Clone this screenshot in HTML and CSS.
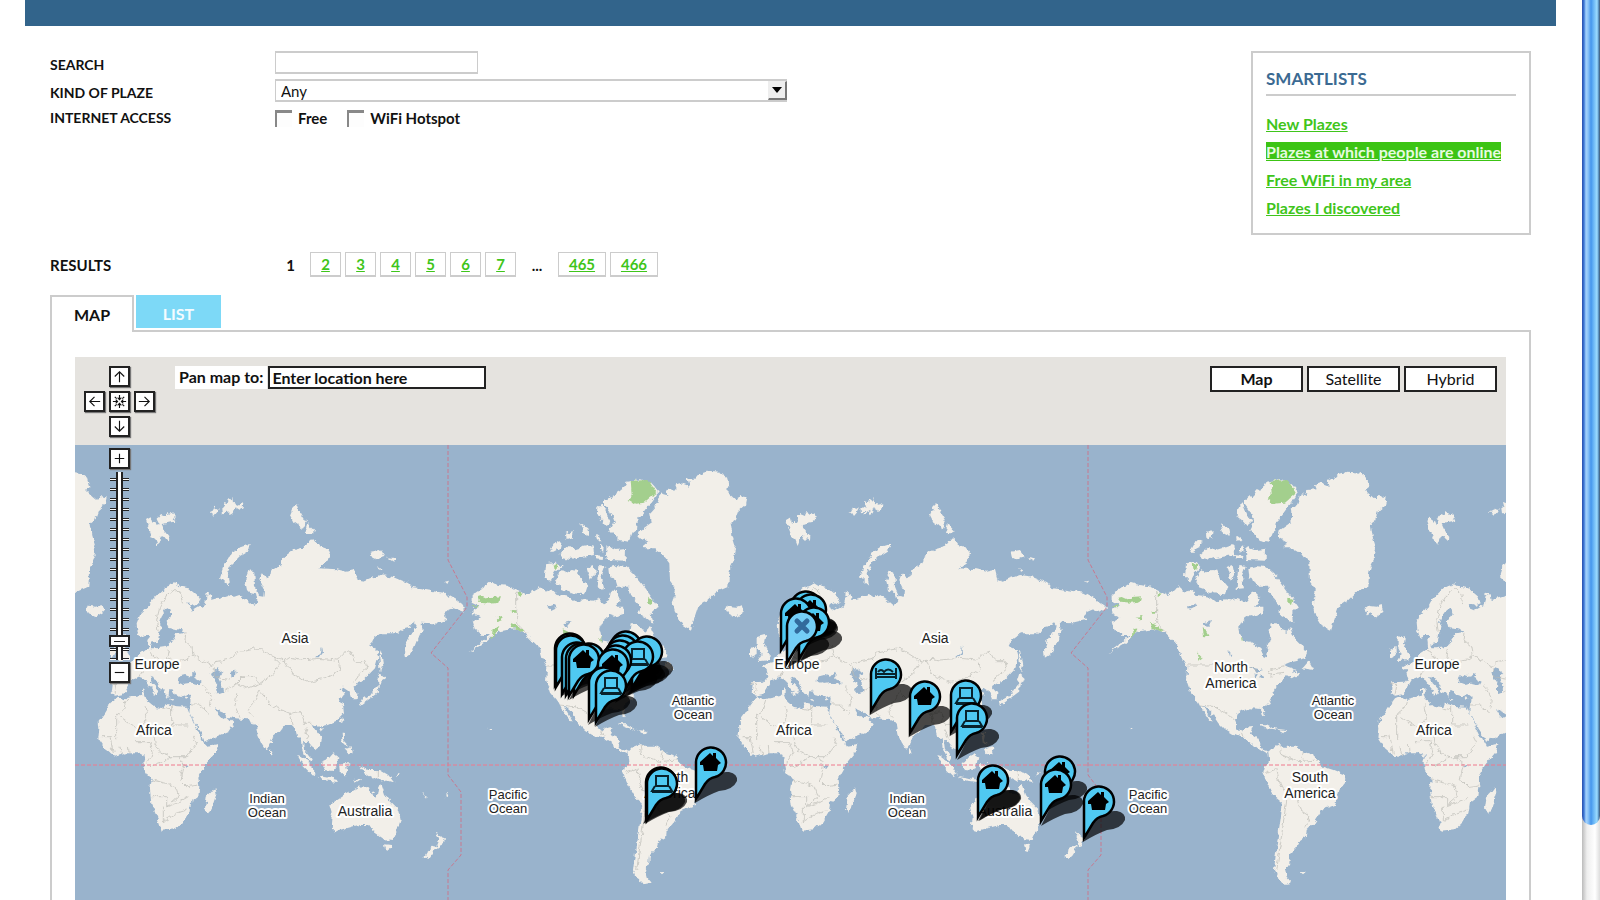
FILE: index.html
```html
<!DOCTYPE html>
<html lang="en">
<head>
<meta charset="utf-8">
<title>Plazes</title>
<link rel="stylesheet" href="styles.css">
</head>
<body>
<div class="window">
  <main class="page">
    <div class="banner"></div>
    <div class="content">
      <div class="top">
        <form class="filters">
          <label class="caption" for="search">SEARCH</label>
          <input class="field search" id="search" type="text">
          <label class="caption" for="kind">KIND OF PLAZE</label>
          <div class="select-wrap">
            <select class="field kind" id="kind"><option>Any</option></select>
            <span class="select-arrow"></span>
          </div>
          <span class="caption access">INTERNET ACCESS</span>
          <div class="checks">
            <label class="check"><input type="checkbox">Free</label>
            <label class="check"><input type="checkbox">WiFi Hotspot</label>
          </div>
        </form>
        <aside class="smartlists">
          <h2>SMARTLISTS</h2>
          <ul>
            <li><a href="#">New Plazes</a></li>
            <li><a class="current" href="#">Plazes at which people are online</a></li>
            <li><a href="#">Free WiFi in my area</a></li>
            <li><a href="#">Plazes I discovered</a></li>
          </ul>
        </aside>
      </div>
      <div class="results">
        <span class="results-title">RESULTS</span>
        <nav class="pages">
          <span class="here">1</span>
          <a href="#">2</a><a href="#">3</a><a href="#">4</a><a href="#">5</a><a href="#">6</a><a href="#">7</a>
          <span class="dots">...</span>
          <a class="wide" href="#">465</a><a class="wide" href="#">466</a>
        </nav>
      </div>
      <div class="tabs">
        <button class="tab active" type="button">MAP</button>
        <button class="tab" type="button">LIST</button>
      </div>
      <section class="panel">
        <div class="map">
          <svg class="world" width="100%" height="600" role="img" aria-label="World map">
            <defs>
              <filter id="coast" x="-5%" y="-5%" width="110%" height="110%">
                <feTurbulence type="fractalNoise" baseFrequency="0.16" numOctaves="3" seed="4" result="n"/>
                <feDisplacementMap in="SourceGraphic" in2="n" scale="6" xChannelSelector="R" yChannelSelector="G"/>
              </filter>
              <g id="east" transform="translate(625 -17) scale(.33333)">
                <g class="land">
                  <path d="M230 850L240 825 262 805 272 785 290 765 310 745 345 730 362 740 385 745 415 770 422 790 405 797 385 790 395 812 420 797 432 800 440 770 452 762 455 780 475 775 505 765 520 770 535 765 560 780 580 798 592 780 588 760 565 755 558 720 570 688 583 695 585 740 597 768 610 770 612 750 598 720 605 700 620 712 635 705 637 690 665 672 668 655 700 630 735 620 750 600 765 598 778 618 800 625 810 640 800 665 775 685 830 688 860 695 885 690 893 720 905 725 930 715 960 705 1000 710 1045 730 1058 745 1100 750 1150 758 1190 780 1218 800 1210 815 1180 805 1155 815 1160 840 1120 850 1082 848 1085 870 1075 895 1065 920 1050 945 1035 955 1032 930 1040 905 1060 880 1070 860 1060 847 1050 860 1030 865 1010 880 960 880 940 895 928 920 950 930 955 950 945 985 920 1010 905 1025 892 1030 874 1040 892 1060 890 1078 876 1078 868 1055 850 1043 838 1052 832 1050 856 1060 848 1070 836 1075 850 1100 852 1120 835 1140 800 1155 775 1160 755 1155 770 1175 785 1195 783 1215 768 1228 755 1218 745 1205 732 1207 735 1230 755 1255 750 1265 735 1245 728 1225 725 1195 712 1190 705 1165 695 1155 675 1155 660 1175 635 1195 630 1215 618 1230 605 1210 592 1180 588 1155 580 1145 565 1138 525 1135 500 1130 490 1115 465 1105 475 1122 490 1137 502 1130 521 1150 505 1175 470 1190 435 1205 425 1180 405 1150 388 1118 390 1095 392 1070 385 1065 365 1072 345 1065 338 1052 328 1050 325 1072 315 1060 302 1045 290 1020 270 1010 278 1030 300 1052 290 1065 270 1040 252 1015 240 1010 215 1020 200 1045 190 1062 165 1067 155 1060 158 1035 153 1027 195 1025 205 1010 200 990 185 980 205 970 225 965 235 945 250 935 265 925 262 900 270 890 277 905 272 925 290 925 320 920 335 905 345 890 350 880 375 875 355 868 325 865 320 845 335 820 330 805 318 810 305 830 297 850 308 860 295 880 290 905 277 908 268 885 255 885 240 892 232 870Z"/>
                  <path d="M175 1070L195 1078 255 1065 262 1085 280 1100 310 1105 315 1090 345 1098 380 1100 390 1125 410 1165 425 1195 438 1217 475 1212 468 1235 435 1275 415 1310 418 1340 415 1370 390 1390 385 1420 370 1445 345 1468 305 1472 295 1440 275 1395 270 1350 275 1320 255 1290 250 1265 255 1250 235 1240 200 1240 165 1250 135 1225 115 1195 118 1165 116 1145 135 1120 150 1095 165 1075Z"/>
                  <path d="M465 1342L470 1360 455 1405 443 1418 435 1405 440 1370 455 1355ZM808 1395L820 1385 850 1365 875 1352 895 1340 925 1338 930 1355 950 1370 955 1340 965 1335 975 1365 990 1385 1015 1410 1022 1440 1010 1475 998 1500 970 1497 950 1480 935 1470 925 1455 895 1455 860 1465 825 1475 815 1465 818 1430ZM975 1513L993 1515 986 1533 978 1530ZM1125 1472L1140 1490 1155 1495 1145 1515 1130 1520 1138 1500ZM1125 1515L1130 1522 1108 1557 1090 1552 1100 1535ZM900 1278L925 1290 960 1290 985 1305 1003 1328 975 1320 950 1322 920 1305ZM783 1270L800 1262 820 1240 835 1250 830 1275 820 1293 795 1290ZM712 1245L722 1248 745 1265 770 1303 760 1308 730 1278ZM770 1308L800 1312 835 1320 832 1326 790 1320ZM840 1270L872 1270 855 1280 860 1302 843 1303ZM845 1178L856 1178 852 1200 868 1217 848 1208ZM855 1227L875 1222 878 1240 862 1243ZM880 1320L905 1318 885 1330ZM1010 1300L1020 1300 1005 1312ZM1085 1355L1100 1370 1096 1372ZM1160 1362L1165 1368 1150 1375Z"/>
                  <path d="M958 1000L978 1018 958 1030 952 1020ZM960 1030L957 1055 935 1072 900 1098 896 1085 933 1065 948 1040ZM962 930L970 975 962 997 958 950ZM848 1135L854 1138 848 1152 843 1148ZM630 1225L638 1240 630 1246ZM780 1165L792 1162 786 1175ZM258 540L272 532 277 548 285 542 290 555 297 548 290 535 300 522 315 528 318 516 330 524 344 520 347 532 340 545 318 550 305 552 312 568 328 588 327 602 318 598 308 585 303 592 293 618 286 600 276 592 270 575ZM445 518L458 512 463 503 470 508 480 502 474 514 462 528 456 518ZM484 505L495 498 492 486 503 490 508 474 516 482 520 470 522 488 532 494 550 490 548 505 536 512 524 505 518 520 508 526 508 512 498 518 486 520ZM572 612L568 628 540 645 515 670 500 700 508 737 480 712 490 680 515 640 545 620ZM710 490L722 520 738 545 728 565 700 545 690 525 700 500ZM745 550L765 572 755 583 735 582ZM932 635L960 630 974 652 950 658 935 650ZM980 650L1005 655 1000 662ZM955 680L968 690 960 692ZM1155 725L1167 722 1162 732ZM75 805L85 797 110 800 125 795 131 815 105 832 85 822ZM437 755l10 2 -2 12 -9-4ZM246 1048l8-3 0 22-8 0ZM275 1055l15 5-8 8ZM325 1076l15 2-4 4ZM372 1072l14 3-8 4Z"/>
                </g>
                <g class="sea">
                  <path d="M355 1010L375 1005 390 1010 405 995 411 1005 402 1013 425 1025 420 1034 395 1028 370 1032 353 1025ZM452 1000L470 985 490 998 478 1015 485 1030 490 1057 475 1062 465 1050 472 1035 460 1018ZM512 995L527 992 525 1008 515 1013ZM370 1276L386 1277 378 1288ZM765 952L783 937 786 918 789 935 776 952Z"/>
                </g>
                <path class="border" d="M295 880L290 840 300 800 320 765 345 745 362 760 368 790M375 875L372 900 395 920 400 945 380 960 350 965 320 955 325 930M400 945L455 980 470 965 520 955 530 940 570 930 600 925 640 950 675 965 690 955 720 960 780 955 830 960 850 940 870 935 885 965 915 965 920 985 895 1005 880 1025M675 965L700 1005 750 1027 800 1015 840 990 835 965M640 950L660 970 640 1000 600 1030 560 1045 530 1030 490 1055M530 1030L550 1010 580 1010 600 1030M460 985L460 1010 510 1020M445 1050L430 1035M440 1050L455 1075 450 1100M530 1060L525 1100 540 1130M600 1050L575 1100 565 1115 580 1130M605 1060L640 1100 690 1120 720 1115 730 1150 755 1150M690 1120L700 1155M735 1165L745 1200M200 1080L190 1110 170 1125 170 1200M255 1095L260 1130 240 1170 180 1130M335 1098L335 1155 385 1155M310 1105L335 1110M280 1180L285 1210 300 1240 330 1250 380 1250 410 1210 400 1190M225 1205L270 1205 280 1240 260 1270M125 1190L150 1190 160 1240M180 1220L185 1245M205 1215L207 1240M330 1250L300 1270 270 1280M355 1250L370 1275 360 1320 380 1340 415 1335M275 1320L320 1330 345 1340 355 1370 320 1400 320 1370 275 1370M320 1400L350 1390 385 1370M310 1400L310 1445 350 1420 380 1410M390 1095L420 1095 450 1120M955 1290V1322M235 965L250 990 240 1010M265 930L280 950 300 960 290 980M150 1030L170 1035 165 1062"/>
              </g>
              <g id="west" transform="translate(385 83) scale(.33333)">
                <g class="land">
                  <path d="M35 465L65 445 90 428 115 435 145 438 175 452 200 465 240 442 255 455 275 450 290 465 330 470 350 487 375 478 400 482 420 475 430 490 447 480 452 455 470 455 482 480 465 500 490 500 490 522 465 530 450 525 430 540 418 565 425 600 450 605 480 620 490 650 500 655 505 628 500 615 515 600 508 580 512 550 530 550 545 570 560 575 570 560 580 590 600 610 622 640 615 655 580 662 550 675 560 680 590 690 602 700 575 715 560 705 550 725 530 740 520 760 505 790 490 800 495 830 485 825 480 807 450 805 415 815 405 840 410 865 425 872 440 860 458 858 450 885 470 892 475 910 490 930 507 935 500 942 480 930 450 905 425 890 400 885 375 870 355 850 330 812 310 795 338 845 328 840 305 805 295 785 270 755 258 720 262 680 245 655 235 620 215 600 195 580 170 568 140 570 115 575 95 590 75 610 25 640 70 603 90 585 65 585 45 570 38 545 60 532 35 520 40 505 60 497 35 485Z"/>
                  <path d="M505 935L520 920 540 912 550 920 590 920 610 935 640 945 655 965 670 980 700 990 737 1005 735 1025 715 1050 705 1095 665 1110 640 1150 620 1170 618 1190 595 1205 590 1225 570 1245 568 1270 555 1290 560 1310 575 1328 555 1332 530 1315 522 1290 530 1220 540 1150 548 1090 525 1070 505 1035 490 1000 495 980 508 965ZM598 1296L614 1296 606 1303Z"/>
                  <path d="M540 270L575 245 570 215 592 190 602 160 622 165 618 150 650 148 645 135 662 130 690 140 682 115 700 120 715 103 740 95 780 98 800 112 808 140 795 150 805 160 830 182 838 168 860 172 855 195 835 212 825 240 812 250 818 290 827 320 820 345 825 355 812 380 807 400 805 440 770 455 745 480 715 500 705 530 692 572 665 555 650 530 638 490 648 450 630 425 628 370 605 340 580 325 550 325 562 305 535 290Z"/>
                  <path d="M435 180L450 168 458 175 470 150 482 155 500 125 540 118 575 130 597 155 575 185 550 220 530 245 528 270 515 280 505 305 480 300 450 270 462 245 450 215 435 195ZM412 205L428 190 440 220 455 245 440 258 425 240 410 228ZM440 318L470 330 498 326 497 362 440 360 438 340ZM270 335L290 300 305 305 300 325 280 335ZM318 280L338 270 335 295 320 300ZM360 250L385 265 390 290 370 280ZM298 345L330 318 345 328 370 320 400 315 402 345 370 350 330 357 308 352ZM408 285L428 300 410 302ZM420 315L432 318 430 335 420 330ZM405 345L430 348 428 360 408 358ZM258 370L285 365 305 380 285 400 270 425 255 410ZM285 420L305 390 320 398 335 390 352 392 360 415 382 440 375 463 340 460 300 445ZM380 382L400 375 405 400 392 422ZM415 375L437 378 425 410 432 445 410 447ZM445 385L470 378 500 382 520 400 545 430 570 465 595 500 575 520 580 550 560 535 535 520 542 500 515 470 505 440 470 440 462 415 448 412ZM608 685L627 662 642 690ZM473 852L500 853 532 870 505 865ZM532 870L560 873 550 880ZM870 630L890 618 890 645 870 655ZM893 590L915 585 912 612 930 642 925 660 893 664 905 645 893 620ZM85 863l10 5-4 3Z"/>
                </g>
                <g class="sea"><path d="M310 550L335 543 318 562ZM262 500L285 492 290 500 270 510ZM388 630L400 645 395 652ZM445 675L465 685 490 690 468 695ZM460 700L475 708 468 718ZM482 705L495 712 482 718ZM600 690L578 700 585 692ZM590 180l-8 0-44 75 4 2Z"/></g>
                <g class="park"><path d="M512 122L565 120 590 158 555 188 525 191 503 178 515 165ZM278 370L293 372 288 390 280 386ZM55 470L65 468 80 475 123 472 118 485 90 488 60 485ZM172 455L185 458 178 472ZM110 530L128 528 120 542ZM150 545L190 570 185 575 155 562ZM98 565L115 562 95 598ZM308 568L325 575 328 590 312 588ZM562 473L580 480 575 495 562 488ZM288 637L305 655 300 658ZM155 510l15 1-2 7-12 0ZM35 500l20-5-2 7ZM420 590l8 10-6 2Z"/></g>
                <path class="border" d="M170 455V550L200 580M262 675H440L470 690M510 690L550 680M300 795L345 800 380 820 405 845M425 872L432 890M540 915L545 945 600 965 650 960M610 935L605 960M495 1000L530 985 540 1030 550 1050 590 1070 600 1110 630 1130 615 1160M560 1080L550 1150 540 1220 530 1290M505 690L510 705 555 700"/>
              </g>
              <g id="globe"><use href="#west"/><use href="#east"/></g>
              <path id="dateline" d="M1013 88V203L1032 240V250L996 296 1013 311V418L1026 435V498L1013 513V600"/>
              <g id="shade"><path d="M0 0L12-24Q22-32 34-31 43-29 42-22 38-13 24-12 13-8 0 0Z"/></g>
              <g id="pin"><path d="M1-4V-41A15 15 0 1 1 20-26Q14-25 10-19Z"/></g>
              <g id="house"><use href="#pin"/><path class="ink" d="M15-50L18-47V-50H21V-45L26-40 23-38 22-32H9L8-38H5V-41Z"/></g>
              <g id="laptop"><use href="#pin"/><path class="line" d="M10-48H22V-38H10ZM9-38L6-33H26L23-38M6-32H26"/></g>
              <g id="bed"><use href="#pin"/><path class="line" d="M6-47V-36M26-47V-36M6-38H26M6-41H26M8-43Q11-47 14-43 18-48 23-43"/></g>
            </defs>
            <rect class="water" y="88" width="100%" height="512"/>
            <g filter="url(#coast)">
              <use href="#globe" x="-640"/><use href="#globe"/><use href="#globe" x="640"/>
            </g>
            <g class="dash"><use href="#dateline" x="-640"/><use href="#dateline"/></g>
            <path class="equator" d="M0 408H3000"/>
            <g class="place">
              <text x="220" y="286">Asia</text><text x="860" y="286">Asia</text>
              <text x="82" y="312">Europe</text><text x="722" y="312">Europe</text><text x="1362" y="312">Europe</text>
              <text x="79" y="378">Africa</text><text x="719" y="378">Africa</text><text x="1359" y="378">Africa</text>
              <text x="290" y="459">Australia</text><text x="930" y="459">Australia</text>
              <text x="1156" y="315">North</text><text x="1156" y="331">America</text>
              <text x="595" y="425">South</text><text x="595" y="441">America</text>
              <text x="1235" y="425">South</text><text x="1235" y="441">America</text>
            </g>
            <g class="place ocean">
              <text x="192" y="446">Indian</text><text x="192" y="460">Ocean</text>
              <text x="832" y="446">Indian</text><text x="832" y="460">Ocean</text>
              <text x="433" y="442">Pacific</text><text x="433" y="456">Ocean</text>
              <text x="1073" y="442">Pacific</text><text x="1073" y="456">Ocean</text>
              <text x="618" y="348">Atlantic</text><text x="618" y="362">Ocean</text>
              <text x="1258" y="348">Atlantic</text><text x="1258" y="362">Ocean</text>
            </g>
            <g class="shades">
              <use href="#shade" x="487" y="339"/><use href="#shade" x="494" y="343"/><use href="#shade" x="490" y="340"/>
              <use href="#shade" x="544" y="334"/><use href="#shade" x="546" y="338"/><use href="#shade" x="548" y="341"/><use href="#shade" x="556" y="335"/><use href="#shade" x="552" y="339"/><use href="#shade" x="540" y="346"/>
              <use href="#shade" x="513" y="368"/><use href="#shade" x="520" y="370"/>
              <use href="#shade" x="570" y="467"/><use href="#shade" x="568" y="467"/><use href="#shade" x="620" y="446"/>
              <use href="#shade" x="719" y="292"/><use href="#shade" x="720" y="293"/><use href="#shade" x="721" y="295"/><use href="#shade" x="725" y="305"/><use href="#shade" x="712" y="311"/>
              <use href="#shade" x="795" y="358"/><use href="#shade" x="834" y="380"/><use href="#shade" x="875" y="379"/><use href="#shade" x="882" y="403"/>
              <use href="#shade" x="903" y="464"/><use href="#shade" x="904" y="464"/><use href="#shade" x="970" y="455"/><use href="#shade" x="966" y="469"/><use href="#shade" x="1008" y="485"/>
            </g>
            <g class="pins">
              <use href="#pin" x="479" y="332"/><use href="#pin" x="480" y="334"/><use href="#pin" x="486" y="341"/><use href="#pin" x="498" y="342"/><use href="#pin" x="490" y="342"/><use href="#house" x="493" y="343"/>
              <use href="#pin" x="535" y="330"/><use href="#pin" x="532" y="334"/><use href="#pin" x="556" y="335"/><use href="#pin" x="529" y="339"/><use href="#laptop" x="547" y="340"/><use href="#pin" x="525" y="344"/><use href="#house" x="522" y="348"/>
              <use href="#pin" x="513" y="366"/><use href="#laptop" x="520" y="369"/>
              <use href="#house" x="620" y="446"/><use href="#pin" x="570" y="466"/><use href="#laptop" x="571" y="467"/>
              <use href="#pin" x="715" y="290"/><use href="#house" x="720" y="293"/><use href="#house" x="705" y="297"/><use href="#house" x="723" y="306"/>
              <g transform="translate(711 310)"><use class="pale" href="#pin"/><path class="cross" d="M11-46L21-36M21-46L11-36"/></g>
              <use href="#bed" x="795" y="358"/><use href="#laptop" x="875" y="379"/><use href="#house" x="834" y="380"/><use href="#laptop" x="881" y="402"/>
              <use href="#house" x="969" y="455"/><use href="#house" x="902" y="464"/><use href="#house" x="965" y="468"/><use href="#house" x="1008" y="485"/>
            </g>
          </svg>
          <div class="controls">
            <div class="pan">
              <button class="ctl up" type="button" aria-label="Pan up"><svg viewBox="0 0 18 18"><path d="M9 15V4M4 9L9 4 14 9"/></svg></button>
              <button class="ctl left" type="button" aria-label="Pan left"><svg viewBox="0 0 18 18"><path d="M15 9H4M9 4L4 9 9 14"/></svg></button>
              <button class="ctl" type="button" aria-label="Center"><svg viewBox="0 0 18 18"><path d="M9 2V7M7 5L9 7 11 5M9 16V11M7 13L9 11 11 13M2 9H7M5 7L7 9 5 11M16 9H11M13 7L11 9 13 11M4 4L6 6M14 4L12 6M4 14L6 12M14 14L12 12"/></svg></button>
              <button class="ctl" type="button" aria-label="Pan right"><svg viewBox="0 0 18 18"><path d="M3 9H14M9 4L14 9 9 14"/></svg></button>
              <button class="ctl down" type="button" aria-label="Pan down"><svg viewBox="0 0 18 18"><path d="M9 3V14M4 9L9 14 14 9"/></svg></button>
            </div>
            <button class="ctl" type="button" aria-label="Zoom in"><svg viewBox="0 0 18 18"><path d="M4 9H14M9 4V14"/></svg></button>
            <div class="zoom"><input type="range" min="0" max="17" value="1" aria-label="Zoom"></div>
            <button class="ctl" type="button" aria-label="Zoom out"><svg viewBox="0 0 18 18"><path d="M4 9H14"/></svg></button>
          </div>
          <form class="locate">
            <label for="place">Pan map to:</label>
            <input id="place" type="text" value="Enter location here">
          </form>
          <div class="types">
            <button class="on" type="button">Map</button>
            <button type="button">Satellite</button>
            <button type="button">Hybrid</button>
          </div>
        </div>
      </section>
    </div>
  </main>
  <div class="scrollbar"><div class="thumb"></div></div>
</div>
</body>
</html>
```

FILE: styles.css
```css
* { box-sizing: border-box; }
body {
  margin: 0;
  background: #fff;
  color: #111;
  font: bold 15px/20px Lato, sans-serif;
  overflow: hidden;
}
input, select, button { font: inherit; color: inherit; }
button { cursor: pointer; padding: 0; border-radius: 0; }
a { color: #3fc51b; }

.window { display: flex; height: 100vh; overflow: hidden; }
.page { flex: 1; padding: 0 26px 0 25px; }
.banner { height: 26px; background: #32648b; }
.content { padding: 25px 25px 0; }

.top { display: flex; justify-content: space-between; align-items: flex-start; height: 201px; }
.filters {
  display: grid;
  grid-template-columns: 225px 512px;
  grid-template-rows: 23px 23px 22px;
  row-gap: 5px;
}
.caption { font-size: 14px; line-height: 28px; }
.access { line-height: 22px; }
.field {
  border: 1px solid #ccc;
  border-width: 2px 1px;
  border-radius: 0;
  background: #fff;
  padding: 0 5px;
  outline: 0;
}
.search { width: 203px; height: 23px; }
.select-wrap { display: grid; }
.kind, .select-arrow { grid-area: 1 / 1; }
.kind { appearance: none; width: 100%; height: 23px; line-height: 18px; font-weight: normal; }
.select-arrow {
  justify-self: end;
  align-self: center;
  display: flex;
  align-items: center;
  justify-content: center;
  width: 19px;
  height: 19px;
  background: #eee;
  border: 1px solid #eee;
  border-right: 2px solid #777;
  border-bottom: 2px solid #777;
  pointer-events: none;
}
.select-arrow::after {
  content: "";
  border: 5px solid transparent;
  border-top: 6px solid #000;
  border-bottom: 0;
}
.checks { display: flex; gap: 20px; line-height: 22px; }
.check { display: flex; align-items: center; gap: 6px; }
.check input {
  appearance: none;
  width: 17px;
  height: 17px;
  margin: 0;
  background: #fdfdfd;
  border: 0 solid #888;
  border-width: 3px 0 0 2px;
}

.smartlists { width: 280px; height: 184px; border: 2px solid #ccc; padding: 16px 13px; }
.smartlists h2 {
  margin: 0;
  padding-bottom: 5px;
  border-bottom: 2px solid #ccc;
  color: #3b6a92;
  font-size: 17px;
  line-height: 20px;
}
.smartlists ul { list-style: none; margin: 14px 0 0; padding: 0; font-size: 16px; line-height: 28px; }
.smartlists .current { background: #3cc414; color: #e6fbe0; }

.results { display: flex; align-items: center; height: 25px; }
.results-title { width: 225px; }
.pages { display: flex; align-items: center; gap: 4px; }
.pages a, .pages span { width: 31px; text-align: center; line-height: 22px; }
.pages a { border: 1px solid #ccc; border-width: 1px 1px 2px; }
.pages .wide { width: 48px; }
.pages .dots { width: 34px; }

.tabs { display: flex; gap: 2px; margin-top: 18px; align-items: flex-start; }
.tab {
  width: 85px;
  height: 33px;
  border: 0;
  background: #7dd9f7;
  color: #f4fcff;
  font-size: 16px;
  line-height: 37px;
}
.tab.active {
  position: relative;
  z-index: 1;
  width: 84px;
  height: 37px;
  background: #fff;
  color: #111;
  border: 2px solid #ccc;
  border-bottom: 0;
  line-height: 35px;
}
.panel { margin-top: -2px; border: 2px solid #ccc; padding: 25px 23px; }
.map { position: relative; background: #e5e3df; overflow: hidden; }

.world { display: block; }
.water, .sea { fill: #99b3cc; }
.land { fill: #f2efe9; }
.park { fill: #a3cf8d; }
.border { fill: none; stroke: #b9b9b4; stroke-width: 2; }
.dash { fill: none; stroke: #c8788f; stroke-width: 1; stroke-dasharray: 4 2; }
.equator { stroke: #f0788c; stroke-width: 1; stroke-dasharray: 4 2; fill: none; }
.place {
  font: 14px "Liberation Sans", Arial, sans-serif;
  text-anchor: middle;
  fill: #222;
  stroke: #fff;
  stroke-width: 4px;
  stroke-linejoin: round;
  paint-order: stroke;
}
.ocean { font-size: 13px; }
.shades { fill: #000; fill-opacity: .7; }
.pins { fill: #4fc9f2; stroke: #000; stroke-width: 2.5; stroke-linejoin: miter; }
.pins .pale { fill: #74cdf5; }
.ink { fill: #000; stroke: none; }
.line { fill: none; stroke: #08222c; stroke-width: 2; }
.cross { fill: none; stroke: #326a9c; stroke-width: 5; stroke-linecap: round; }

.controls {
  position: absolute;
  left: 9px;
  top: 9px;
  display: flex;
  flex-direction: column;
  align-items: center;
}
.pan { display: grid; grid-template-columns: repeat(3, 21px); gap: 4px; margin-bottom: 11px; }
.up, .down { grid-column: 2; }
.left { grid-column: 1; }
.ctl {
  width: 21px;
  height: 21px;
  background: #fff;
  border: 2px solid #222;
  box-shadow: 1px 1px 1px #777;
}
.ctl svg { display: block; width: 17px; height: 17px; fill: none; stroke: #111; stroke-width: 1.2; }
.zoom {
  display: flex;
  justify-content: center;
  width: 19px;
  height: 188px;
  margin: 3px 0 2px;
  padding: 3px 0;
  background:
    linear-gradient(90deg, transparent 6px, #222 6px, #222 8px, #fff 8px, #fff 11px, #222 11px, #222 13px, transparent 13px),
    repeating-linear-gradient(transparent 0 6px, #222 6px 7px, #fff 7px 8px, #222 8px 9px, transparent 9px 10px);
}
.zoom input {
  appearance: none;
  writing-mode: vertical-lr;
  direction: rtl;
  width: 21px;
  height: 182px;
  margin: 0;
  flex: none;
  background: none;
}
.zoom input::-webkit-slider-thumb {
  appearance: none;
  width: 21px;
  height: 12px;
  border: 2px solid #222;
  background: linear-gradient(#222, #222) center / 11px 1px no-repeat #fff;
}

.locate { position: absolute; left: 100px; top: 9px; display: flex; gap: 1px; font-size: 16px; }
.locate label { height: 23px; padding: 0 4px; background: #fff; line-height: 22px; }
.locate input {
  width: 218px;
  height: 23px;
  padding: 0 2px;
  border: 2px solid #222;
  border-radius: 0;
  background: #fff;
}
.types { position: absolute; right: 9px; top: 9px; display: flex; gap: 4px; }
.types button {
  width: 93px;
  height: 26px;
  border: 2px solid #222;
  background: #fff;
  font-size: 16px;
  font-weight: normal;
}
.types .on { font-weight: bold; }

.scrollbar {
  width: 18px;
  background: linear-gradient(90deg, #bbb, #eee 5px, #fff 13px, #ddd);
}
.thumb {
  height: 825px;
  border-radius: 0 0 9px 9px;
  background: linear-gradient(90deg, #2c4fa8, #3c78d8 2px, #a5d3fb 4px, #8cc4f8 6px, #4596ec 9px, #62b0f4 11px, #9cdcff 15px, #4a7fb0 17px, #456);
}
```
